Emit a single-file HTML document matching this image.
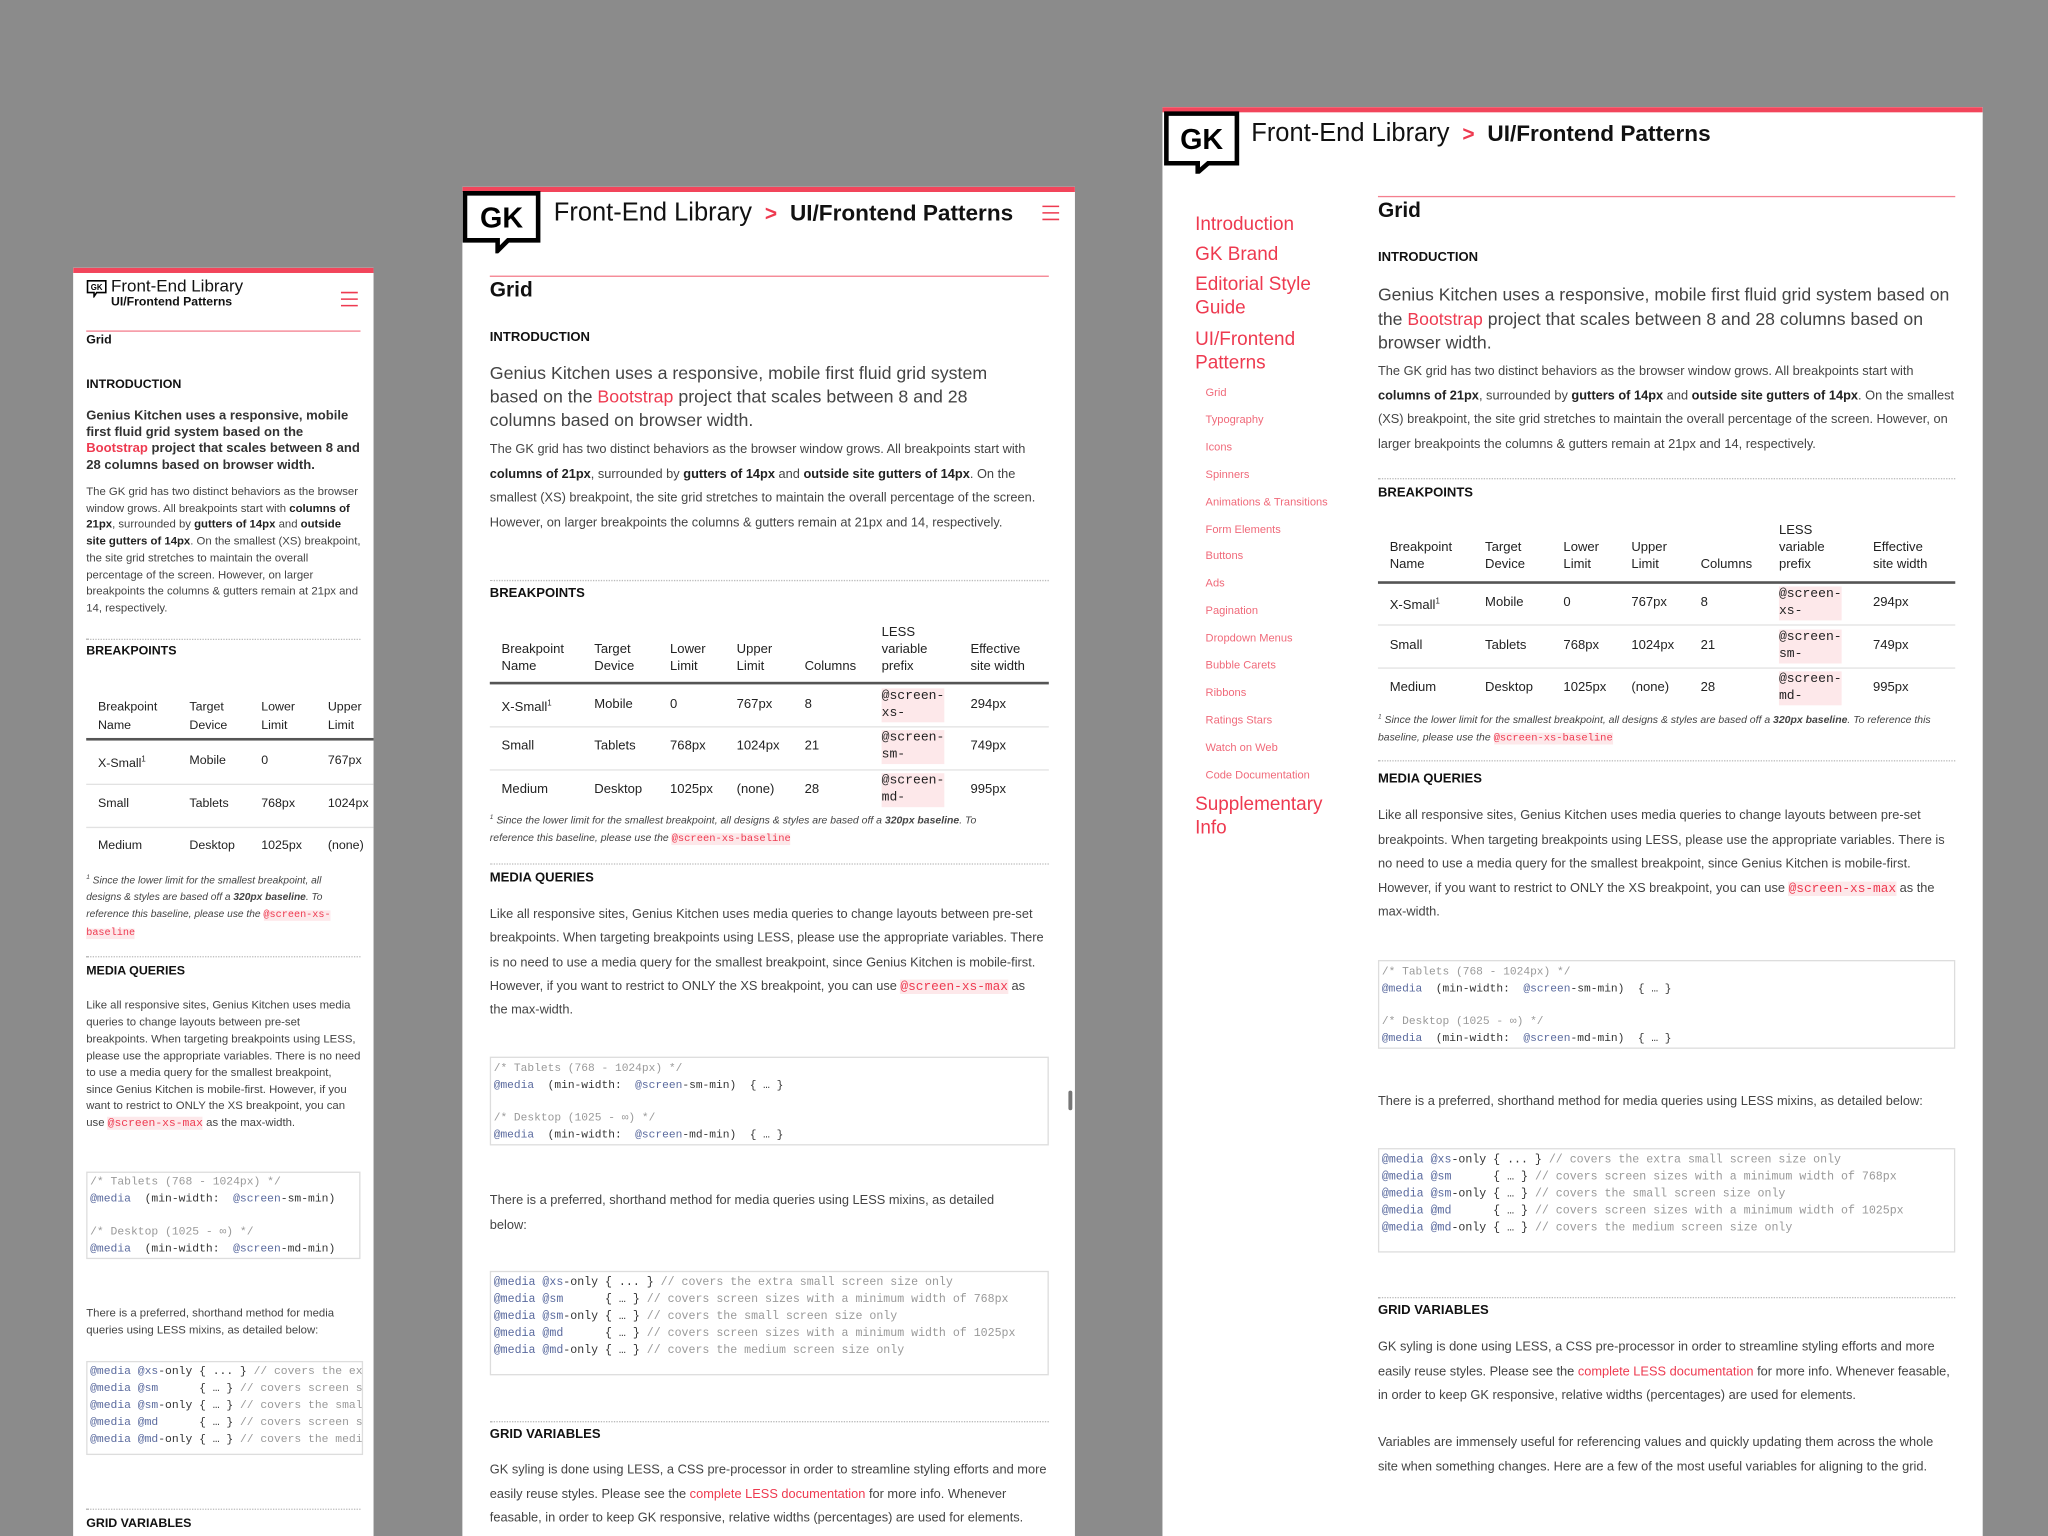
<!DOCTYPE html>
<html><head><meta charset="utf-8"><style>
html,body{margin:0;padding:0;background:#8b8b8b;width:2048px;height:1536px;overflow:hidden}
#w{position:absolute;left:0;top:0;width:1568px;height:1176px;transform:scale(1.306122);transform-origin:0 0;font-family:"Liberation Sans",sans-serif;color:#333;overflow:hidden}
.p{position:absolute;background:#fff;overflow:hidden}
.a{position:absolute;margin:0}
.bar{position:absolute;left:0;top:0;right:0;height:4px;background:#f2455b}
.rl{position:absolute;height:1px;background:#f47f8e}
.dl{position:absolute;height:0;border-top:1px dotted #bbb}
.h{font-weight:bold;color:#111}
.r{color:#ee3a50}
.lead{color:#444}
.body{color:#444}
.body b{color:#222}
.code{position:absolute;border:1px solid #ddd;font-family:"Liberation Mono",monospace;white-space:pre;color:#333;box-sizing:border-box}
.cm{color:#999}.kw{color:#5a6a9e}
.pre{font-family:"Liberation Mono",monospace;color:#ee3a50;background:#fde8ea}
.c{position:absolute;white-space:nowrap;color:#222}
.bd{position:absolute;height:2px;background:#555}
.ln{position:absolute;height:1px;background:#e2e2e2}
.fn{position:absolute;font-style:italic;color:#444}
.side{position:absolute;color:#ee3a50;white-space:nowrap}
</style></head><body><div id="w">

<!-- RIGHT PANEL -->
<div class="p" style="left:890px;top:82px;width:628px;height:1094px">
<div class="bar"></div>
<svg class="a" style="left:1px;top:3px" width="60" height="48" viewBox="0 0 60 48"><path d="M2 2H56V40H34L26 47V40H2Z" fill="#fff" stroke="#000" stroke-width="3.5"/><text x="29" y="29" font-family="Liberation Sans" font-weight="bold" font-size="22" text-anchor="middle" fill="#000">GK</text></svg>
<div class="a" style="left:68px;top:8px;font-size:19.5px;line-height:24px;white-space:nowrap;color:#111">Front-End Library <span class="r" style="font-weight:bold;font-size:16px">&nbsp;&gt;&nbsp;</span> <b style="font-size:17.3px">UI/Frontend Patterns</b></div>
<div class="side" style="left:25px;top:81px;font-size:14.5px;line-height:18px">Introduction</div>
<div class="side" style="left:25px;top:104px;font-size:14.5px;line-height:18px">GK Brand</div>
<div class="side" style="left:25px;top:127px;font-size:14.5px;line-height:18px">Editorial Style<br>Guide</div>
<div class="side" style="left:25px;top:169px;font-size:14.5px;line-height:18px">UI/Frontend<br>Patterns</div>
<div class="side" style="left:33px;top:208px;font-size:8.5px;line-height:20.9px;color:#f06a7a">Grid<br>Typography<br>Icons<br>Spinners<br>Animations &amp; Transitions<br>Form Elements<br>Buttons<br>Ads<br>Pagination<br>Dropdown Menus<br>Bubble Carets<br>Ribbons<br>Ratings Stars<br>Watch on Web<br>Code Documentation</div>
<div class="side" style="left:25px;top:525px;font-size:14.5px;line-height:18px">Supplementary<br>Info</div>

<div class="rl" style="left:165px;top:68px;width:442px"></div>
<div class="a h" style="left:165px;top:70px;font-size:16px;line-height:20px">Grid</div>
<div class="a h" style="left:165px;top:109px;font-size:10px;line-height:14px">INTRODUCTION</div>
<div class="a lead" style="left:165px;top:135px;width:442px;font-size:13.5px;line-height:18.5px">Genius Kitchen uses a responsive, mobile first fluid grid system based on the <span class="r">Bootstrap</span> project that scales between 8 and 28 columns based on browser width.</div>
<div class="a body" style="left:165px;top:194px;width:445px;font-size:9.8px;line-height:18.5px">The GK grid has two distinct behaviors as the browser window grows. All breakpoints start with <b>columns of 21px</b>, surrounded by <b>gutters of 14px</b> and <b>outside site gutters of 14px</b>. On the smallest (XS) breakpoint, the site grid stretches to maintain the overall percentage of the screen. However, on larger breakpoints the columns &amp; gutters remain at 21px and 14, respectively.</div>
<div class="dl" style="left:165px;top:284px;width:442px"></div>
<div class="a h" style="left:165px;top:289px;font-size:10px;line-height:14px">BREAKPOINTS</div>
<div style="position:absolute;left:165px;top:0;width:442px;font-size:10px;line-height:13px">
<div class="c" style="left:9px;top:331px">Breakpoint<br>Name</div>
<div class="c" style="left:82px;top:331px">Target<br>Device</div>
<div class="c" style="left:142px;top:331px">Lower<br>Limit</div>
<div class="c" style="left:194px;top:331px">Upper<br>Limit</div>
<div class="c" style="left:247px;top:344px">Columns</div>
<div class="c" style="left:307px;top:318px">LESS<br>variable<br>prefix</div>
<div class="c" style="left:379px;top:331px">Effective<br>site width</div>
<div class="bd" style="left:0;top:363px;width:442px"></div>
<div class="c" style="left:9px;top:373px">X-Small<sup style="font-size:6px">1</sup></div><div class="c" style="left:82px;top:373px">Mobile</div><div class="c" style="left:142px;top:373px">0</div><div class="c" style="left:194px;top:373px">767px</div><div class="c" style="left:247px;top:373px">8</div><div class="c pre" style="left:307px;top:367px">@screen-<br>xs-</div><div class="c" style="left:379px;top:373px">294px</div>
<div class="ln" style="left:0;top:396px;width:442px"></div>
<div class="c" style="left:9px;top:406px">Small</div><div class="c" style="left:82px;top:406px">Tablets</div><div class="c" style="left:142px;top:406px">768px</div><div class="c" style="left:194px;top:406px">1024px</div><div class="c" style="left:247px;top:406px">21</div><div class="c pre" style="left:307px;top:400px">@screen-<br>sm-</div><div class="c" style="left:379px;top:406px">749px</div>
<div class="ln" style="left:0;top:429px;width:442px"></div>
<div class="c" style="left:9px;top:438px">Medium</div><div class="c" style="left:82px;top:438px">Desktop</div><div class="c" style="left:142px;top:438px">1025px</div><div class="c" style="left:194px;top:438px">(none)</div><div class="c" style="left:247px;top:438px">28</div><div class="c pre" style="left:307px;top:432px">@screen-<br>md-</div><div class="c" style="left:379px;top:438px">995px</div>
</div>
<div class="fn" style="left:165px;top:461px;width:435px;font-size:8px;line-height:13px"><sup style="font-size:5px">1</sup> Since the lower limit for the smallest breakpoint, all designs &amp; styles are based off a <b>320px baseline</b>. To reference this baseline, please use the <span class="pre" style="font-style:normal">@screen-xs-baseline</span></div>
<div class="dl" style="left:165px;top:500px;width:442px"></div>
<div class="a h" style="left:165px;top:508px;font-size:10px;line-height:14px">MEDIA QUERIES</div>
<div class="a body" style="left:165px;top:534px;width:442px;font-size:9.8px;line-height:18.5px">Like all responsive sites, Genius Kitchen uses media queries to change layouts between pre-set breakpoints. When targeting breakpoints using LESS, please use the appropriate variables. There is no need to use a media query for the smallest breakpoint, since Genius Kitchen is mobile-first. However, if you want to restrict to ONLY the XS breakpoint, you can use <span class="pre">@screen-xs-max</span> as the max-width.</div>
<div class="code" style="left:165px;top:653px;width:442px;height:68px;font-size:8.6px;line-height:12.8px;padding:2px 2px"><span class="cm">/* Tablets (768 - 1024px) */</span>
<span class="kw">@media</span>  (min-width:  <span class="kw">@screen</span>-sm-min)  { … }

<span class="cm">/* Desktop (1025 - ∞) */</span>
<span class="kw">@media</span>  (min-width:  <span class="kw">@screen</span>-md-min)  { … }</div>
<div class="a body" style="left:165px;top:753px;width:442px;font-size:9.8px;line-height:18.5px">There is a preferred, shorthand method for media queries using LESS mixins, as detailed below:</div>
<div class="code" style="left:165px;top:797px;width:442px;height:80px;font-size:8.9px;line-height:12.9px;padding:2px 2px"><span class="kw">@media @xs</span>-only { ... } <span class="cm">// covers the extra small screen size only</span>
<span class="kw">@media @sm</span>      { … } <span class="cm">// covers screen sizes with a minimum width of 768px</span>
<span class="kw">@media @sm</span>-only { … } <span class="cm">// covers the small screen size only</span>
<span class="kw">@media @md</span>      { … } <span class="cm">// covers screen sizes with a minimum width of 1025px</span>
<span class="kw">@media @md</span>-only { … } <span class="cm">// covers the medium screen size only</span></div>
<div class="dl" style="left:165px;top:911px;width:442px"></div>
<div class="a h" style="left:165px;top:915px;font-size:10px;line-height:14px">GRID VARIABLES</div>
<div class="a body" style="left:165px;top:941px;width:442px;font-size:9.8px;line-height:18.5px">GK syling is done using LESS, a CSS pre-processor in order to streamline styling efforts and more easily reuse styles. Please see the <span class="r">complete LESS documentation</span> for more info. Whenever feasable, in order to keep GK responsive, relative widths (percentages) are used for elements.</div>
<div class="a body" style="left:165px;top:1014px;width:442px;font-size:9.8px;line-height:18.5px">Variables are immensely useful for referencing values and quickly updating them across the whole site when something changes. Here are a few of the most useful variables for aligning to the grid.</div>
</div>

<!-- MIDDLE PANEL -->
<div class="p" style="left:354px;top:143px;width:469px;height:1033px">
<div class="bar"></div>
<svg class="a" style="left:0px;top:3px" width="62" height="48" viewBox="0 0 62 48"><path d="M2 2H58V38H35L27 46V38H2Z" fill="#fff" stroke="#000" stroke-width="3.5"/><text x="30" y="28" font-family="Liberation Sans" font-weight="bold" font-size="22" text-anchor="middle" fill="#000">GK</text></svg>
<div class="a" style="left:70px;top:8px;font-size:19.5px;line-height:24px;white-space:nowrap;color:#111">Front-End Library <span class="r" style="font-weight:bold;font-size:16px">&nbsp;&gt;&nbsp;</span> <b style="font-size:17.3px">UI/Frontend Patterns</b></div>
<svg class="a" style="left:444px;top:14px" width="13" height="12"><path d="M0 1H13M0 6H13M0 11H13" stroke="#ee3a50" stroke-width="1.2"/></svg>
<div class="rl" style="left:21px;top:68px;width:428px"></div>
<div class="a h" style="left:21px;top:70px;font-size:16px;line-height:20px">Grid</div>
<div class="a h" style="left:21px;top:109px;font-size:10px;line-height:14px">INTRODUCTION</div>
<div class="a lead" style="left:21px;top:134px;width:410px;font-size:13.6px;line-height:18px">Genius Kitchen uses a responsive, mobile first fluid grid system based on the <span class="r">Bootstrap</span> project that scales between 8 and 28 columns based on browser width.</div>
<div class="a body" style="left:21px;top:193px;width:430px;font-size:9.8px;line-height:18.5px">The GK grid has two distinct behaviors as the browser window grows. All breakpoints start with <b>columns of 21px</b>, surrounded by <b>gutters of 14px</b> and <b>outside site gutters of 14px</b>. On the smallest (XS) breakpoint, the site grid stretches to maintain the overall percentage of the screen. However, on larger breakpoints the columns &amp; gutters remain at 21px and 14, respectively.</div>
<div class="dl" style="left:21px;top:301px;width:428px"></div>
<div class="a h" style="left:21px;top:305px;font-size:10px;line-height:14px">BREAKPOINTS</div>
<div style="position:absolute;left:21px;top:0;width:428px;font-size:10px;line-height:13px">
<div class="c" style="left:9px;top:348px">Breakpoint<br>Name</div>
<div class="c" style="left:80px;top:348px">Target<br>Device</div>
<div class="c" style="left:138px;top:348px">Lower<br>Limit</div>
<div class="c" style="left:189px;top:348px">Upper<br>Limit</div>
<div class="c" style="left:241px;top:361px">Columns</div>
<div class="c" style="left:300px;top:335px">LESS<br>variable<br>prefix</div>
<div class="c" style="left:368px;top:348px">Effective<br>site width</div>
<div class="bd" style="left:0;top:379px;width:428px"></div>
<div class="c" style="left:9px;top:390px">X-Small<sup style="font-size:6px">1</sup></div><div class="c" style="left:80px;top:390px">Mobile</div><div class="c" style="left:138px;top:390px">0</div><div class="c" style="left:189px;top:390px">767px</div><div class="c" style="left:241px;top:390px">8</div><div class="c pre" style="left:300px;top:384px">@screen-<br>xs-</div><div class="c" style="left:368px;top:390px">294px</div>
<div class="ln" style="left:0;top:413px;width:428px"></div>
<div class="c" style="left:9px;top:422px">Small</div><div class="c" style="left:80px;top:422px">Tablets</div><div class="c" style="left:138px;top:422px">768px</div><div class="c" style="left:189px;top:422px">1024px</div><div class="c" style="left:241px;top:422px">21</div><div class="c pre" style="left:300px;top:416px">@screen-<br>sm-</div><div class="c" style="left:368px;top:422px">749px</div>
<div class="ln" style="left:0;top:446px;width:428px"></div>
<div class="c" style="left:9px;top:455px">Medium</div><div class="c" style="left:80px;top:455px">Desktop</div><div class="c" style="left:138px;top:455px">1025px</div><div class="c" style="left:189px;top:455px">(none)</div><div class="c" style="left:241px;top:455px">28</div><div class="c pre" style="left:300px;top:449px">@screen-<br>md-</div><div class="c" style="left:368px;top:455px">995px</div>
</div>
<div class="fn" style="left:21px;top:477px;width:405px;font-size:8px;line-height:13px"><sup style="font-size:5px">1</sup> Since the lower limit for the smallest breakpoint, all designs &amp; styles are based off a <b>320px baseline</b>. To reference this baseline, please use the <span class="pre" style="font-style:normal">@screen-xs-baseline</span></div>
<div class="dl" style="left:21px;top:518px;width:428px"></div>
<div class="a h" style="left:21px;top:523px;font-size:10px;line-height:14px">MEDIA QUERIES</div>
<div class="a body" style="left:21px;top:549px;width:425px;font-size:9.8px;line-height:18.3px">Like all responsive sites, Genius Kitchen uses media queries to change layouts between pre-set breakpoints. When targeting breakpoints using LESS, please use the appropriate variables. There is no need to use a media query for the smallest breakpoint, since Genius Kitchen is mobile-first. However, if you want to restrict to ONLY the XS breakpoint, you can use <span class="pre">@screen-xs-max</span> as the max-width.</div>
<div class="code" style="left:21px;top:666px;width:428px;height:68px;font-size:8.6px;line-height:12.8px;padding:2px 2px"><span class="cm">/* Tablets (768 - 1024px) */</span>
<span class="kw">@media</span>  (min-width:  <span class="kw">@screen</span>-sm-min)  { … }

<span class="cm">/* Desktop (1025 - ∞) */</span>
<span class="kw">@media</span>  (min-width:  <span class="kw">@screen</span>-md-min)  { … }</div>
<div class="a body" style="left:21px;top:768px;width:410px;font-size:9.8px;line-height:18.5px">There is a preferred, shorthand method for media queries using LESS mixins, as detailed below:</div>
<div class="code" style="left:21px;top:830px;width:428px;height:80px;font-size:8.9px;line-height:12.9px;padding:2px 2px"><span class="kw">@media @xs</span>-only { ... } <span class="cm">// covers the extra small screen size only</span>
<span class="kw">@media @sm</span>      { … } <span class="cm">// covers screen sizes with a minimum width of 768px</span>
<span class="kw">@media @sm</span>-only { … } <span class="cm">// covers the small screen size only</span>
<span class="kw">@media @md</span>      { … } <span class="cm">// covers screen sizes with a minimum width of 1025px</span>
<span class="kw">@media @md</span>-only { … } <span class="cm">// covers the medium screen size only</span></div>
<div class="dl" style="left:21px;top:945px;width:428px"></div>
<div class="a h" style="left:21px;top:949px;font-size:10px;line-height:14px">GRID VARIABLES</div>
<div class="a body" style="left:21px;top:974px;width:430px;font-size:9.8px;line-height:18.5px">GK syling is done using LESS, a CSS pre-processor in order to streamline styling efforts and more easily reuse styles. Please see the <span class="r">complete LESS documentation</span> for more info. Whenever feasable, in order to keep GK responsive, relative widths (percentages) are used for elements.</div>
<div class="a" style="left:464px;top:692px;width:3px;height:15px;background:#777;border-radius:2px"></div>
</div>

<!-- LEFT PANEL -->
<div class="p" style="left:56px;top:205px;width:230px;height:971px">
<div class="bar"></div>
<svg class="a" style="left:10px;top:9px" width="16" height="14" viewBox="0 0 16 14"><path d="M1 1H15V10H8L6 13V10H1Z" fill="#fff" stroke="#000" stroke-width="1.2"/><text x="8" y="8" font-family="Liberation Sans" font-weight="bold" font-size="6" text-anchor="middle">GK</text></svg>
<div class="a" style="left:29px;top:6px;font-size:13px;line-height:15px;white-space:nowrap;color:#111">Front-End Library</div>
<div class="a" style="left:29px;top:20px;font-size:9.4px;line-height:11px;white-space:nowrap;font-weight:bold;color:#111">UI/Frontend Patterns</div>
<svg class="a" style="left:205px;top:18px" width="13" height="12"><path d="M0 1H13M0 6H13M0 11H13" stroke="#ee3a50" stroke-width="1.2"/></svg>
<div class="rl" style="left:10px;top:48px;width:210px"></div>
<div class="a h" style="left:10px;top:50px;font-size:9.5px;line-height:12px">Grid</div>
<div class="a h" style="left:10px;top:84px;font-size:9.5px;line-height:12px">INTRODUCTION</div>
<div class="a" style="left:10px;top:108px;width:212px;font-size:10px;line-height:12.7px;font-weight:bold;color:#333">Genius Kitchen uses a responsive, mobile first fluid grid system based on the <span class="r">Bootstrap</span> project that scales between 8 and 28 columns based on browser width.</div>
<div class="a body" style="left:10px;top:165px;width:212px;font-size:8.7px;line-height:12.7px">The GK grid has two distinct behaviors as the browser window grows. All breakpoints start with <b>columns of 21px</b>, surrounded by <b>gutters of 14px</b> and <b>outside site gutters of 14px</b>. On the smallest (XS) breakpoint, the site grid stretches to maintain the overall percentage of the screen. However, on larger breakpoints the columns &amp; gutters remain at 21px and 14, respectively.</div>
<div class="dl" style="left:10px;top:284px;width:210px"></div>
<div class="a h" style="left:10px;top:288px;font-size:9.5px;line-height:12px">BREAKPOINTS</div>
<div style="position:absolute;left:10px;top:0;width:260px;font-size:9.5px;line-height:13.5px">
<div class="c" style="left:9px;top:330px">Breakpoint<br>Name</div>
<div class="c" style="left:79px;top:330px">Target<br>Device</div>
<div class="c" style="left:134px;top:330px">Lower<br>Limit</div>
<div class="c" style="left:185px;top:330px">Upper<br>Limit</div>
<div class="bd" style="left:0;top:360px;width:260px"></div>
<div class="c" style="left:9px;top:371px">X-Small<sup style="font-size:6px">1</sup></div><div class="c" style="left:79px;top:371px">Mobile</div><div class="c" style="left:134px;top:371px">0</div><div class="c" style="left:185px;top:371px">767px</div>
<div class="ln" style="left:0;top:395px;width:260px"></div>
<div class="c" style="left:9px;top:404px">Small</div><div class="c" style="left:79px;top:404px">Tablets</div><div class="c" style="left:134px;top:404px">768px</div><div class="c" style="left:185px;top:404px">1024px</div>
<div class="ln" style="left:0;top:428px;width:260px"></div>
<div class="c" style="left:9px;top:436px">Medium</div><div class="c" style="left:79px;top:436px">Desktop</div><div class="c" style="left:134px;top:436px">1025px</div><div class="c" style="left:185px;top:436px">(none)</div>
</div>
<div class="fn" style="left:10px;top:461px;width:205px;font-size:7.8px;line-height:12.7px"><sup style="font-size:5px">1</sup> Since the lower limit for the smallest breakpoint, all designs &amp; styles are based off a <b>320px baseline</b>. To reference this baseline, please use the <span class="pre" style="font-style:normal">@screen-xs-baseline</span></div>
<div class="dl" style="left:10px;top:527px;width:210px"></div>
<div class="a h" style="left:10px;top:533px;font-size:9.5px;line-height:12px">MEDIA QUERIES</div>
<div class="a body" style="left:10px;top:558px;width:210px;font-size:8.7px;line-height:12.9px">Like all responsive sites, Genius Kitchen uses media queries to change layouts between pre-set breakpoints. When targeting breakpoints using LESS, please use the appropriate variables. There is no need to use a media query for the smallest breakpoint, since Genius Kitchen is mobile-first. However, if you want to restrict to ONLY the XS breakpoint, you can use <span class="pre">@screen-xs-max</span> as the max-width.</div>
<div class="code" style="left:10px;top:692px;width:210px;height:67px;font-size:8.7px;line-height:12.8px;padding:1px 2px;overflow:hidden"><span class="cm">/* Tablets (768 - 1024px) */</span>
<span class="kw">@media</span>  (min-width:  <span class="kw">@screen</span>-sm-min)

<span class="cm">/* Desktop (1025 - ∞) */</span>
<span class="kw">@media</span>  (min-width:  <span class="kw">@screen</span>-md-min)</div>
<div class="a body" style="left:10px;top:794px;width:205px;font-size:8.7px;line-height:12.9px">There is a preferred, shorthand method for media queries using LESS mixins, as detailed below:</div>
<div class="code" style="left:10px;top:837px;width:212px;height:72px;font-size:8.7px;line-height:12.9px;padding:1px 2px;overflow:hidden"><span class="kw">@media @xs</span>-only { ... } <span class="cm">// covers the extra small</span>
<span class="kw">@media @sm</span>      { … } <span class="cm">// covers screen sizes</span>
<span class="kw">@media @sm</span>-only { … } <span class="cm">// covers the small</span>
<span class="kw">@media @md</span>      { … } <span class="cm">// covers screen sizes</span>
<span class="kw">@media @md</span>-only { … } <span class="cm">// covers the medium</span></div>
<div class="dl" style="left:10px;top:950px;width:210px"></div>
<div class="a h" style="left:10px;top:956px;font-size:9.5px;line-height:12px">GRID VARIABLES</div>
</div>

</div></body></html>
